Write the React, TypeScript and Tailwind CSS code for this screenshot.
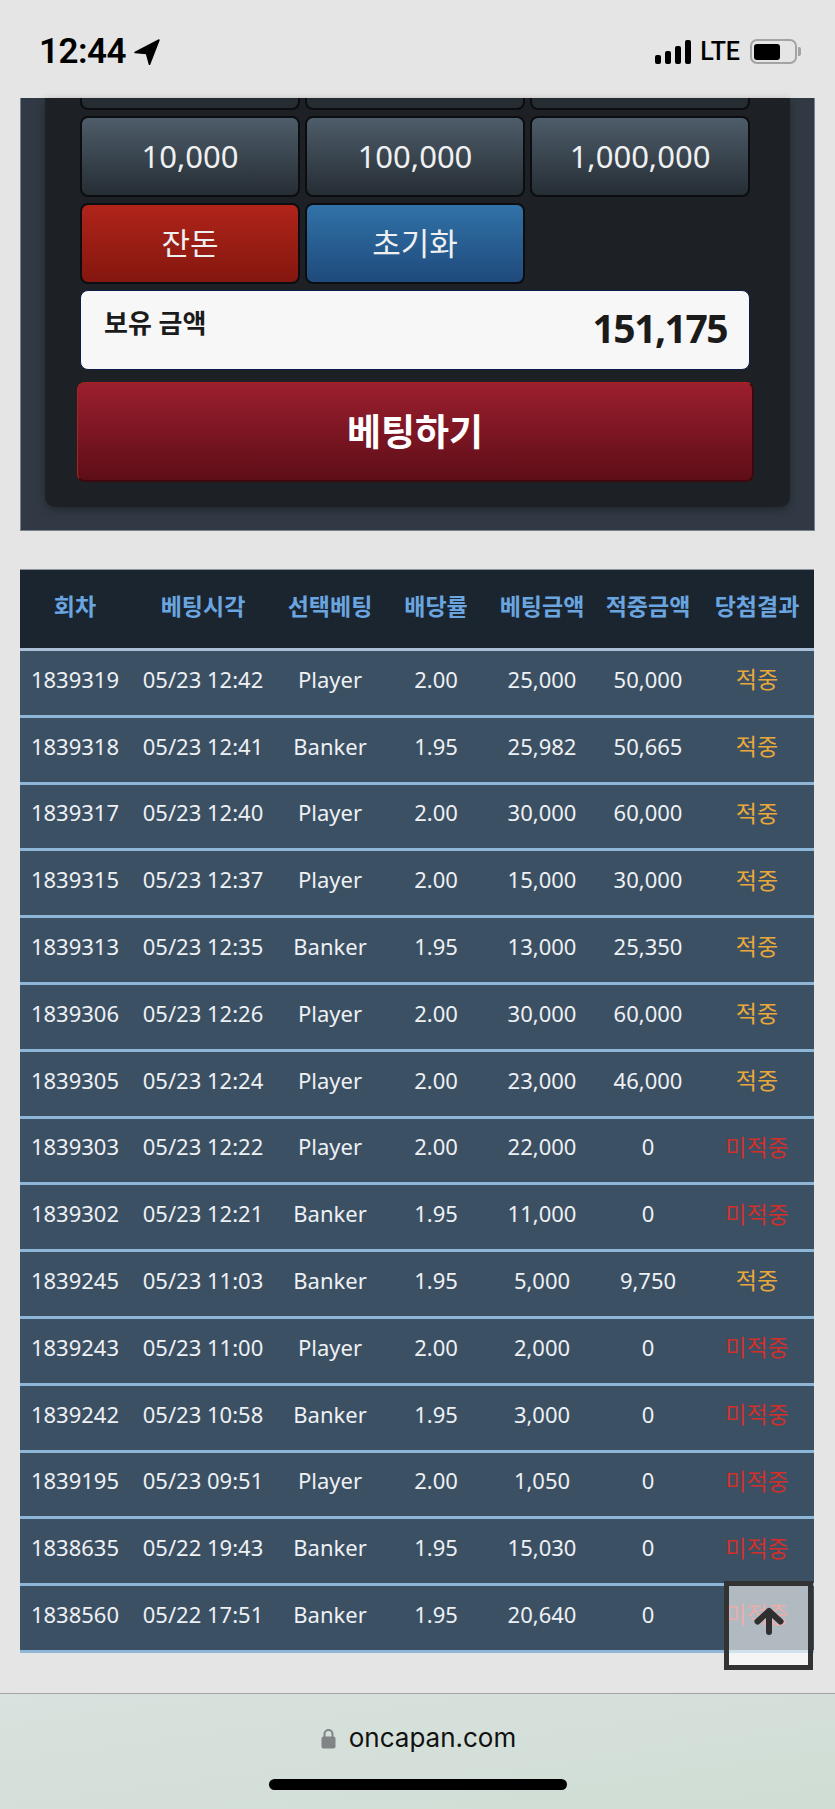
import React from 'react';

const font = { fontFamily: '"Noto Sans", "Noto Sans CJK KR", sans-serif' };

type Row = [string, string, string, string, string, string, boolean];

const rows: Row[] = [
  ['1839319', '05/23 12:42', 'Player', '2.00', '25,000', '50,000', true],
  ['1839318', '05/23 12:41', 'Banker', '1.95', '25,982', '50,665', true],
  ['1839317', '05/23 12:40', 'Player', '2.00', '30,000', '60,000', true],
  ['1839315', '05/23 12:37', 'Player', '2.00', '15,000', '30,000', true],
  ['1839313', '05/23 12:35', 'Banker', '1.95', '13,000', '25,350', true],
  ['1839306', '05/23 12:26', 'Player', '2.00', '30,000', '60,000', true],
  ['1839305', '05/23 12:24', 'Player', '2.00', '23,000', '46,000', true],
  ['1839303', '05/23 12:22', 'Player', '2.00', '22,000', '0', false],
  ['1839302', '05/23 12:21', 'Banker', '1.95', '11,000', '0', false],
  ['1839245', '05/23 11:03', 'Banker', '1.95', '5,000', '9,750', true],
  ['1839243', '05/23 11:00', 'Player', '2.00', '2,000', '0', false],
  ['1839242', '05/23 10:58', 'Banker', '1.95', '3,000', '0', false],
  ['1839195', '05/23 09:51', 'Player', '2.00', '1,050', '0', false],
  ['1838635', '05/22 19:43', 'Banker', '1.95', '15,030', '0', false],
  ['1838560', '05/22 17:51', 'Banker', '1.95', '20,640', '0', false],
];

const headers = ['회차', '베팅시각', '선택베팅', '배당률', '베팅금액', '적중금액', '당첨결과'];
const cols = 'grid grid-cols-[110px_146px_108px_104px_108px_104px_114px] items-center text-center';

const StatusBar = () => (
  <div className="h-[98px] shrink-0 flex items-center justify-between pt-[5px] pl-[39px] pr-[34px] text-black">
    <div className="flex items-center gap-[8px]">
      <span className="text-[35px] leading-[40px] font-semibold tracking-[-0.5px]" style={{ fontFamily: 'Roboto, sans-serif' }}>12:44</span>
      <svg width="26" height="26" viewBox="0 0 26 26" fill="#000">
        <path d="M1 13.5 L25 1 L15.5 25.5 L12.5 14.5 Z" strokeLinejoin="round" stroke="#000" strokeWidth="1.5" />
      </svg>
    </div>
    <div className="flex items-center">
      <div className="flex items-end gap-[4px] h-[24px]">
        <div className="w-[6px] h-[9px] bg-black rounded-[2px]" />
        <div className="w-[6px] h-[13px] bg-black rounded-[2px]" />
        <div className="w-[6px] h-[18px] bg-black rounded-[2px]" />
        <div className="w-[6px] h-[24px] bg-black rounded-[2px]" />
      </div>
      <span className="ml-[9px] text-[25px] leading-[24px] font-medium" style={{ fontFamily: 'Roboto, sans-serif' }}>LTE</span>
      <div className="ml-[10px] w-[47px] h-[25px] border-[2px] border-[#a3a3a3] rounded-[7px] flex items-center pl-[2px]">
        <div className="w-[26px] h-[16px] bg-black rounded-[3px]" />
      </div>
      <div className="ml-[1px] w-[3px] h-[9px] bg-[#a3a3a3] rounded-r-[2px]" />
    </div>
  </div>
);

const ChipButton = ({ label, className }: { label: string; className: string }) => (
  <div
    className={`h-[81px] flex items-center justify-center rounded-[8px] border-[2px] border-[#0b0d10] text-[31px] text-[#eef0f2] ${className}`}
  >
    {label}
  </div>
);

const BetPanel = () => (
  <div className="mx-[20px] h-[433px] shrink-0 bg-[#313a44] border-x border-b border-[#77828e] px-[24px]">
    <div className="h-[409px] bg-[#1d2125] rounded-b-[10px] shadow-[0_3px_8px_rgba(0,0,0,0.35)] pl-[35px]">
      <div className="grid grid-cols-3 gap-x-[5px] gap-y-[6px] w-[670px]">
        <div className="h-[12px] rounded-b-[8px] border-[2px] border-t-0 border-[#0b0d10] bg-[#252c32]" />
        <div className="h-[12px] rounded-b-[8px] border-[2px] border-t-0 border-[#0b0d10] bg-[#252c32]" />
        <div className="h-[12px] rounded-b-[8px] border-[2px] border-t-0 border-[#0b0d10] bg-[#252c32]" />
        <ChipButton label="10,000" className="bg-gradient-to-b from-[#4e5d6a] to-[#262e35]" />
        <ChipButton label="100,000" className="bg-gradient-to-b from-[#4e5d6a] to-[#262e35]" />
        <ChipButton label="1,000,000" className="bg-gradient-to-b from-[#4e5d6a] to-[#262e35]" />
        <ChipButton label="잔돈" className="bg-gradient-to-b from-[#b0241a] to-[#84170f]" />
        <ChipButton label="초기화" className="bg-gradient-to-b from-[#3172a8] to-[#1f4a7c]" />
      </div>
      <div className="mt-[6px] w-[670px] h-[80px] bg-[#f7f7f7] border border-[#0d1b4a] rounded-[8px] flex justify-between pl-[23px] pr-[22px] text-[#1b1b1b]">
        <span className="text-[26px] leading-[34px] font-semibold mt-[15px]">보유 금액</span>
        <span className="text-[39px] leading-[48px] font-bold mt-[13px] tracking-[-1.5px]">151,175</span>
      </div>
      <div className="mt-[12px] -ml-[3px] w-[677px] h-[100px] rounded-[8px] border border-[#a8251f] border-b-[2px] border-r-[2px] border-b-[#3c0a0e] border-r-[#3c0a0e] bg-gradient-to-b from-[#9c1f2e] to-[#5e0e18] flex items-center justify-center text-white text-[37px] font-bold">
        베팅하기
      </div>
    </div>
  </div>
);

const BetTable = () => (
  <div className="mx-[20px] mt-[38px] w-[794px] shrink-0">
    <div className={`${cols} h-[79px] bg-[#1b2530] border-t border-[#8b949e] text-[#6aa5e0] text-[23px] font-semibold pb-[6px]`}>
      {headers.map(h => (
        <div key={h} className="whitespace-nowrap">{h}</div>
      ))}
    </div>
    <div className="h-[3px] bg-[#a9c0d6]" />
    {rows.map(r => (
      <div
        key={r[0]}
        className={`${cols} h-[66.8px] bg-[#3c5064] border-b-[3px] border-[#8db6d8] text-[#eef1f4] text-[22px] pb-[7px]`}
      >
        <div>{r[0]}</div>
        <div className="whitespace-nowrap">{r[1]}</div>
        <div>{r[2]}</div>
        <div>{r[3]}</div>
        <div>{r[4]}</div>
        <div>{r[5]}</div>
        <div className={`text-[23px] ${r[6] ? 'text-[#e9a93a]' : 'text-[#d32f2a]'}`}>{r[6] ? '적중' : '미적중'}</div>
      </div>
    ))}
  </div>
);

const BrowserBar = () => (
  <div className="h-[116px] shrink-0 border-t border-[#a3a3a3] bg-gradient-to-br from-[#d9e2de] to-[#cfddd4] flex flex-col items-center mt-auto">
    <div className="flex items-center mt-[32px] ml-[2px] h-[24px]">
      <svg width="15" height="21" viewBox="0 0 15 21" fill="#808487">
        <path d="M3.5 9 V6 a4 4 0 0 1 8 0 V9" fill="none" stroke="#808487" strokeWidth="2" />
        <rect x="0.5" y="8.5" width="14" height="12" rx="2" />
      </svg>
      <span className="ml-[13px] text-[26px] leading-[24px] text-[#111]" style={{ fontFamily: 'Inter, sans-serif' }}>oncapan.com</span>
    </div>
    <div className="mt-[29px] w-[298px] h-[11px] bg-black rounded-full" />
  </div>
);

const ScrollTop = () => (
  <div className="absolute left-[724px] top-[1581px] w-[89px] h-[89px] border-[5px] border-[#333333] bg-white/60 flex items-center justify-center pb-[10px]">
    <svg width="30" height="28" viewBox="0 0 30 28" fill="none" stroke="#2f2f2f" strokeWidth="6" strokeLinecap="round" strokeLinejoin="round">
      <path d="M15 25 V4 M3.5 14.5 L15 4 L26.5 14.5" />
    </svg>
  </div>
);

export default function App() {
  return (
    <div className="relative w-[835px] h-[1809px] overflow-hidden bg-[#e5e5e5] flex flex-col" style={font}>
      <StatusBar />
      <BetPanel />
      <BetTable />
      <BrowserBar />
      <ScrollTop />
    </div>
  );
}
